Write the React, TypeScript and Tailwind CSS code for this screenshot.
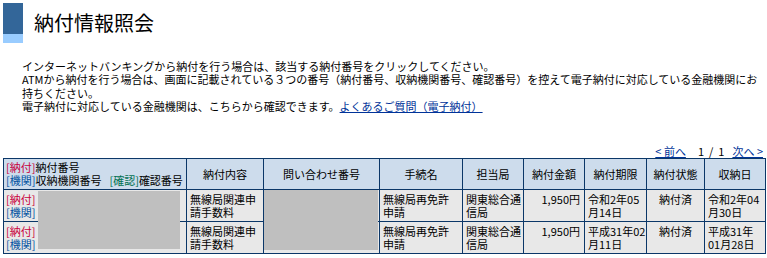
import React from "react";

const TH = "border border-[#0b3768] font-normal align-middle text-center px-[2px]";
const TD = "border border-[#0b3768] align-top whitespace-nowrap px-[3px] pt-[3px] pb-[2px]";

function Row({ kigen, shuno }: { kigen: React.ReactNode; shuno: React.ReactNode }) {
  return (
    <tr className="bg-[#e8e8e8] h-[31px]">
      <td className={TD + " pl-[2px]"}>
        <span className="text-[#c8003c]">[納付]</span>
        <br />
        <span className="text-[#0050a0]">[機関]</span>
      </td>
      <td className={TD}>
        無線局関連申
        <br />
        請手数料
      </td>
      <td className={TD}></td>
      <td className={TD}>
        無線局再免許
        <br />
        申請
      </td>
      <td className={TD + " px-[2px]"}>
        関東総合通
        <br />
        信局
      </td>
      <td className={TD + " text-right pr-[4px]"}>1,950円</td>
      <td className={TD + " px-[2px]"}>{kigen}</td>
      <td className={TD + " text-center"}>納付済</td>
      <td className={TD + " px-[2px]"}>{shuno}</td>
    </tr>
  );
}

export default function App() {
  return (
    <div className="w-[767px] h-[258px] overflow-hidden bg-white font-['Noto_Sans_CJK_JP',sans-serif] text-black">
      <div className="flex items-center pt-[3px] pl-[3px]">
        <div className="flex flex-col w-[20px]">
          <div className="h-[31px] bg-[#336699]" />
          <div className="h-[9px] bg-[#99ccff]" />
        </div>
        <h1 className="ml-[11px] text-[20px] leading-[24px] font-normal">納付情報照会</h1>
      </div>

      <div className="mt-[17px] pl-[22px] text-[11px] leading-[13.33px]">
        <p>インターネットバンキングから納付を行う場合は、該当する納付番号をクリックしてください。</p>
        <p>
          ATMから納付を行う場合は、画面に記載されている３つの番号（納付番号、収納機関番号、確認番号）を控えて電子納付に対応している金融機関にお
          <br />
          持ちください。
        </p>
        <p>
          電子納付に対応している金融機関は、こちらから確認できます。
          <a href="#" className="text-[#003399] underline">
            よくあるご質問（電子納付）
          </a>
        </p>
      </div>

      <div className="mt-[32px] flex justify-end pr-[4px] text-[11px] leading-[13px]">
        <a href="#" className="text-[#003399] underline">
          &lt;&nbsp;前へ
        </a>
        <span className="ml-[12px]">1</span>
        <span className="ml-[5px]">/</span>
        <span className="ml-[5px]">1</span>
        <a href="#" className="ml-[8px] text-[#003399] underline">
          次へ&nbsp;&gt;
        </a>
      </div>

      <div className="relative ml-[3px] w-[762px]">
        <table className="w-[762px] table-fixed border-collapse border border-[#0b3768] text-[11px] leading-[13px]">
          <colgroup>
            <col className="w-[183px]" />
            <col className="w-[77px]" />
            <col className="w-[116px]" />
            <col className="w-[83px]" />
            <col className="w-[61px]" />
            <col className="w-[61px]" />
            <col className="w-[62px]" />
            <col className="w-[58px]" />
            <col className="w-[61px]" />
          </colgroup>
          <thead>
            <tr className="bg-[#cddcec] h-[31px]">
              <th className="border border-[#0b3768] font-normal align-middle text-left whitespace-nowrap pl-[2px]">
                <span className="text-[#c8003c]">[納付]</span>納付番号
                <br />
                <span className="text-[#0050a0]">[機関]</span>収納機関番号
                <span className="ml-[8px] text-[#007050]">[確認]</span>確認番号
              </th>
              <th className={TH}>納付内容</th>
              <th className={TH}>問い合わせ番号</th>
              <th className={TH}>手続名</th>
              <th className={TH}>担当局</th>
              <th className={TH}>納付金額</th>
              <th className={TH}>納付期限</th>
              <th className={TH}>納付状態</th>
              <th className={TH}>収納日</th>
            </tr>
          </thead>
          <tbody>
            <Row
              kigen={
                <>
                  令和2年05
                  <br />
                  月14日
                </>
              }
              shuno={
                <>
                  令和2年04
                  <br />
                  月30日
                </>
              }
            />
            <Row
              kigen={
                <>
                  平成31年02
                  <br />
                  月11日
                </>
              }
              shuno={
                <>
                  平成31年
                  <br />
                  01月28日
                </>
              }
            />
          </tbody>
        </table>
        <div className="absolute left-[35px] top-[33px] w-[142px] h-[58px] bg-[#bfbfbf]" />
        <div className="absolute left-[261px] top-[32px] w-[114px] h-[60px] bg-[#bfbfbf]" />
      </div>
    </div>
  );
}
